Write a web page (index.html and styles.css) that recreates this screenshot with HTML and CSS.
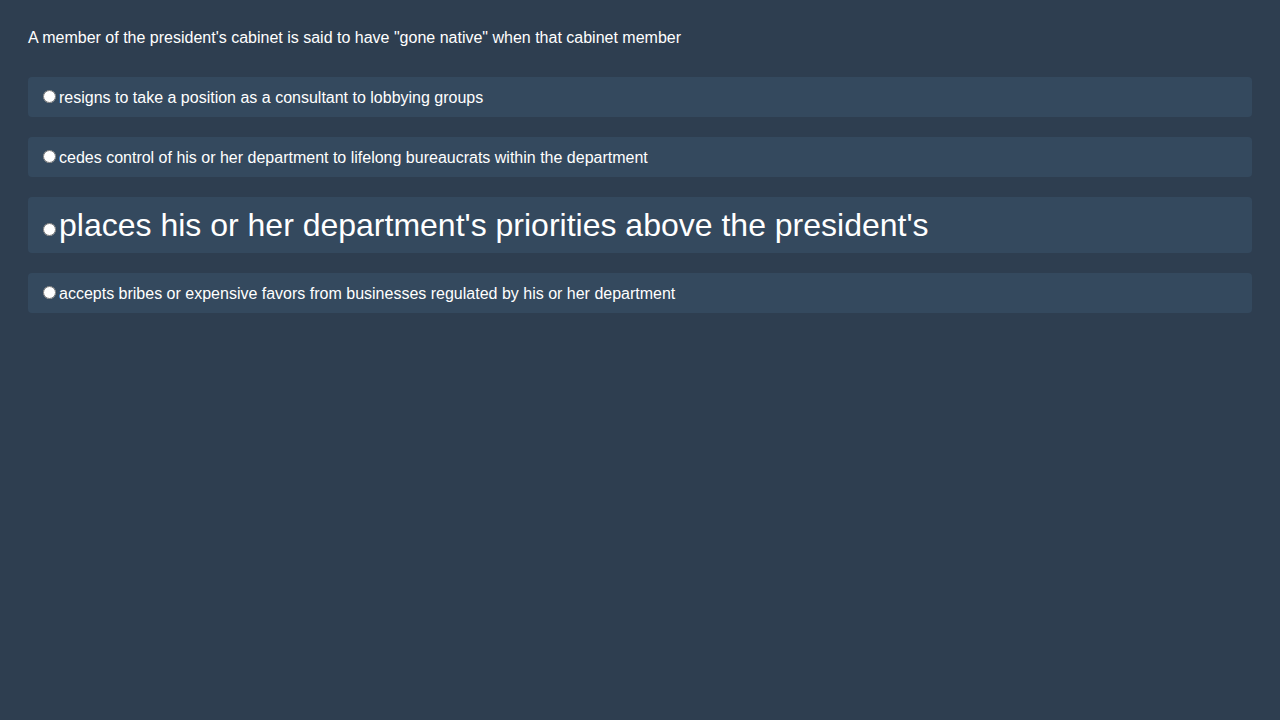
FILE: index.html
```html
<!DOCTYPE html>
<html>
<head>
<meta charset="utf-8">
<link rel="stylesheet" href="styles.css">
</head>
<body>
<div class="quiz">
  <p class="question">A member of the president's cabinet is said to have "gone native" when that cabinet member</p>
  <div class="options">
    <label class="option"><input type="radio" name="q">resigns to take a position as a consultant to lobbying groups</label>
    <label class="option"><input type="radio" name="q">cedes control of his or her department to lifelong bureaucrats within the department</label>
    <label class="option big"><input type="radio" name="q">places his or her department's priorities above the president's</label>
    <label class="option"><input type="radio" name="q">accepts bribes or expensive favors from businesses regulated by his or her department</label>
  </div>
</div>
</body>
</html>
```
FILE: styles.css
```css
html, body {
  margin: 0;
  padding: 0;
  background: #2e3e50;
  height: 100%;
}
.quiz {
  padding: 29px 28px 28px;
  font-family: "Liberation Sans", Arial, sans-serif;
  color: #ffffff;
}
.question {
  margin: 0 0 30px 0;
  font-size: 16px;
  line-height: 18px;
}
.options {
  display: flex;
  flex-direction: column;
  gap: 20px;
}
.option {
  display: block;
  background: #34495e;
  border-radius: 4px;
  padding: 10px 10px;
  font-size: 16px;
  line-height: 18px;
}
.option input {
  margin: 3px 3px 0 5px;
}
.option.big {
  font-size: 32px;
  line-height: 36px;
  padding: 10px 10px;
}
```
